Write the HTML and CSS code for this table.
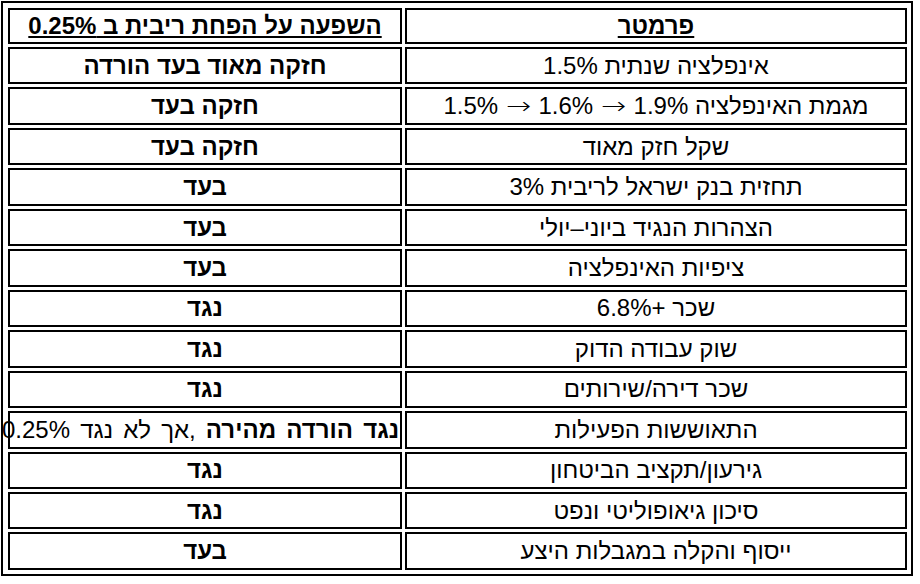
FILE: index.html
```html
<!DOCTYPE html>
<html lang="he" dir="rtl">
<head>
<meta charset="utf-8">
<title>פרמטרים</title>
<link rel="stylesheet" href="styles.css">
</head>
<body>
<table class="grid">
  <colgroup>
    <col class="col-param">
    <col class="col-effect">
  </colgroup>
  <thead>
    <tr class="head">
      <th><u>פרמטר</u></th>
      <th><u>השפעה על הפחת ריבית ב 0.25%</u></th>
    </tr>
  </thead>
  <tbody>
    <tr><td>אינפלציה שנתית 1.5%</td><td class="eff"><b>חזקה מאוד בעד הורדה</b></td></tr>
    <tr><td>מגמת האינפלציה 1.9% <span class="arr">→</span> 1.6% <span class="arr">→</span> 1.5%</td><td class="eff"><b>חזקה בעד</b></td></tr>
    <tr><td>שקל חזק מאוד</td><td class="eff"><b>חזקה בעד</b></td></tr>
    <tr><td>תחזית בנק ישראל לריבית 3%</td><td class="eff"><b>בעד</b></td></tr>
    <tr><td>הצהרות הנגיד ביוני–יולי</td><td class="eff"><b>בעד</b></td></tr>
    <tr><td>ציפיות האינפלציה</td><td class="eff"><b>בעד</b></td></tr>
    <tr><td>שכר +6.8%</td><td class="eff"><b>נגד</b></td></tr>
    <tr><td>שוק עבודה הדוק</td><td class="eff"><b>נגד</b></td></tr>
    <tr><td>שכר דירה/שירותים</td><td class="eff"><b>נגד</b></td></tr>
    <tr><td>התאוששות הפעילות</td><td class="eff mixed"><b>נגד הורדה מהירה</b> ,אך לא נגד 0.25%</td></tr>
    <tr><td>גירעון/תקציב הביטחון</td><td class="eff"><b>נגד</b></td></tr>
    <tr><td>סיכון גיאופוליטי ונפט</td><td class="eff"><b>נגד</b></td></tr>
    <tr><td>ייסוף והקלה במגבלות היצע</td><td class="eff"><b>בעד</b></td></tr>
  </tbody>
</table>
</body>
</html>
```
FILE: styles.css
```css
html, body {
  margin: 0;
  padding: 0;
  background: #ffffff;
}
body {
  padding: 1px 0 0 1px;
  font-family: "Liberation Sans", Arial, "Noto Sans", sans-serif;
  font-size: 24px;
  color: #000000;
}
.grid {
  direction: rtl;
  table-layout: fixed;
  border-collapse: separate;
  border-spacing: 3px;
  border: 2px solid #000000;
  padding: 2px 1px 1px 2px;
  width: 912px;
  margin: 0 auto 0 0;
  box-sizing: border-box;
}
.col-param { width: 502px; }
.col-effect { width: 394px; }
.grid th,
.grid td {
  border: 2px solid #000000;
  padding: 0 1px;
  text-align: center;
  vertical-align: middle;
  white-space: nowrap;
  box-sizing: border-box;
  font-weight: normal;
  line-height: 26px;
}
.grid th {
  font-weight: bold;
}
.grid tr.head { height: 36px; }
.grid tbody tr { height: 37.46px; }
.grid th u,
.grid td b { font-weight: bold; }
.grid td.mixed { word-spacing: 3.5px; }
.arr {
  display: inline-block;
  width: 27px;
  text-align: center;
  font-family: "DejaVu Sans", sans-serif;
  font-size: 24px;
  font-weight: 200;
  transform: scaleX(1.25);
}
```
